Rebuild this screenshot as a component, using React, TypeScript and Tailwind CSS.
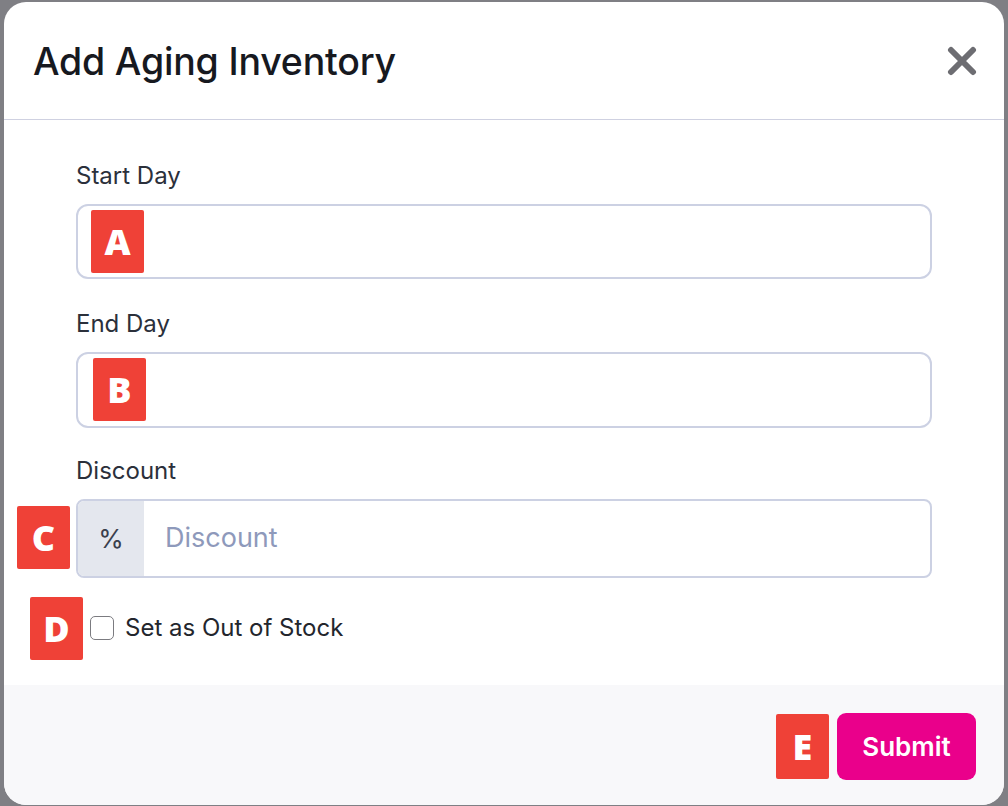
import { ReactNode } from 'react';

function Badge({ letter, className }: { letter: string; className?: string }) {
    return (
        <div
            className={`flex h-[63px] w-[53px] items-center justify-center rounded-[2px] bg-[#ef4137] text-[36px] font-extrabold leading-none text-white ${className ?? ''}`}
            style={{ fontFamily: '"Open Sans", "Noto Sans", sans-serif' }}
        >
            {letter}
        </div>
    );
}

function Field({ label, children }: { label: string; children: ReactNode }) {
    return (
        <div>
            <label className="mb-[14px] block text-[24px] leading-[28px] text-[#2b303b]">
                {label}
            </label>
            {children}
        </div>
    );
}

export default function App() {
    return (
        <div
            className="h-[806px] w-full overflow-hidden bg-[#7f7f84] pl-[4px] pt-[2px]"
            style={{ fontFamily: 'Inter, "Noto Sans", sans-serif' }}
        >
            <div className="flex h-[803px] w-[1000px] flex-col overflow-hidden rounded-[22px] bg-white">
                <div className="flex h-[118px] shrink-0 items-center justify-between border-b-[1.5px] border-[#cfd1e1] pl-[29px] pr-[27px] pt-[3px]">
                    <h2 className="text-[37.5px] font-medium tracking-[-0.2px] text-[#17191f]">
                        Add Aging Inventory
                    </h2>
                    <button className="mb-[3px] flex h-[30px] w-[30px] items-center justify-center text-[#6d6d72]">
                        <svg viewBox="0 0 30 30" className="h-[30px] w-[30px]">
                            <path
                                d="M4 4 L26 26 M26 4 L4 26"
                                stroke="currentColor"
                                strokeWidth="6"
                                strokeLinecap="round"
                            />
                        </svg>
                    </button>
                </div>

                <div className="flex flex-1 flex-col px-[72px] pt-[42px]">
                    <Field label="Start Day">
                        <div className="relative h-[75px] rounded-[12px] border-2 border-[#ccd1e3]">
                            <Badge letter="A" className="absolute left-[13px] top-[4px]" />
                        </div>
                    </Field>

                    <div className="mt-[31px]">
                        <Field label="End Day">
                            <div className="relative h-[76px] rounded-[12px] border-2 border-[#ccd1e3]">
                                <Badge letter="B" className="absolute left-[15px] top-[4px]" />
                            </div>
                        </Field>
                    </div>

                    <div className="mt-[29px]">
                        <Field label="Discount">
                            <div className="relative flex h-[79px] rounded-[8px] border-2 border-[#ccd1e3]">
                                <Badge letter="C" className="absolute left-[-61px] top-[5px]" />
                                <span className="flex w-[66px] items-center justify-center rounded-l-[6px] bg-[#e4e7ee] text-[26px] text-[#3a404d]">
                                    %
                                </span>
                                <input
                                    placeholder="Discount"
                                    className="min-w-0 flex-1 bg-transparent pl-[21px] text-[27px] text-[#2b303b] outline-none placeholder:text-[#8e99bb]"
                                />
                            </div>
                        </Field>
                    </div>

                    <div className="relative mt-[36px] flex items-center">
                        <Badge letter="D" className="absolute left-[-46px] top-[-17px]" />
                        <span className="ml-[14px] h-[24px] w-[24px] rounded-[5px] border-[1.5px] border-[#7b7b80] bg-white" />
                        <span className="ml-[11px] text-[24px] leading-[28px] text-[#23262d]">
                            Set as Out of Stock
                        </span>
                    </div>
                </div>

                <div className="flex h-[120px] shrink-0 items-start justify-end gap-[8px] bg-[#f8f8fa] pr-[28px] pt-[28px]">
                    <Badge letter="E" className="mt-[1px] h-[65px]" />
                    <button className="flex h-[67px] w-[139px] items-center justify-center rounded-[9px] bg-[#ea008b] text-[26px] font-semibold text-white">
                        Submit
                    </button>
                </div>
            </div>
        </div>
    );
}
